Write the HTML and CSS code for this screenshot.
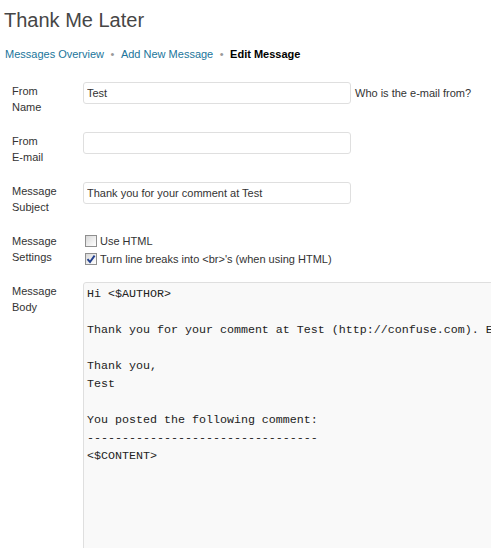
FILE: index.html
```html
<!DOCTYPE html>
<html>
<head>
<meta charset="utf-8">
<title>Thank Me Later</title>
<link rel="stylesheet" href="styles.css">
</head>
<body>
<div class="wrap">
  <h2 class="title">Thank Me Later</h2>
  <div class="crumbs">
    <a href="#">Messages Overview</a><span class="sep">•</span><a href="#">Add New Message</a><span class="sep">•</span><span class="current">Edit Message</span>
  </div>
  <div class="form">
    <div class="row">
      <div class="label">From<br>Name</div>
      <div class="field"><input class="text" type="text" value="Test"><span class="hint">Who is the e-mail from?</span></div>
    </div>
    <div class="row">
      <div class="label">From<br>E-mail</div>
      <div class="field"><input class="text" type="text" value=""></div>
    </div>
    <div class="row">
      <div class="label">Message<br>Subject</div>
      <div class="field"><input class="text" type="text" value="Thank you for your comment at Test"></div>
    </div>
    <div class="row">
      <div class="label">Message<br>Settings</div>
      <div class="field checks">
        <label class="check"><span class="box"></span>Use HTML</label>
        <label class="check"><span class="box"><svg viewBox="0 0 10 10" width="10" height="10"><path d="M1.5 5.2 L4 8 L8.6 1.6" fill="none" stroke="#23408e" stroke-width="1.9"/></svg></span>Turn line breaks into &lt;br&gt;'s (when using HTML)</label>
      </div>
    </div>
    <div class="row last">
      <div class="label">Message<br>Body</div>
      <div class="field clip"><textarea class="body" wrap="off" readonly>Hi &lt;$AUTHOR&gt;

Thank you for your comment at Test (http://confuse.com). Enjoy your stay!

Thank you,
Test

You posted the following comment:
---------------------------------
&lt;$CONTENT&gt;</textarea></div>
    </div>
  </div>
</div>
</body>
</html>
```

FILE: styles.css
```css
html, body {
  margin: 0;
  padding: 0;
  background: #fff;
  overflow: hidden;
}
body {
  font-family: Arial, "Liberation Sans", sans-serif;
  color: #333;
  height: 548px;
}
.wrap {
  padding-left: 4px;
  height: 548px;
  display: flex;
  flex-direction: column;
  overflow: hidden;
}
.title {
  margin: 0;
  padding-top: 8px;
  font-size: 20px;
  line-height: 24px;
  font-weight: normal;
  color: #464646;
}
.crumbs {
  margin-top: 14px;
  font-size: 11px;
  line-height: 17px;
  padding-left: 1px;
  color: #999;
}
.crumbs a {
  color: #21759b;
  text-decoration: none;
}
.crumbs .sep {
  margin: 0 6.5px;
  color: #999;
}
.crumbs .current {
  font-weight: bold;
  color: #000;
}
.form {
  margin-top: 19px;
  padding-left: 8px;
  flex: 1;
  display: flex;
  flex-direction: column;
  min-height: 0;
}
.row {
  display: grid;
  grid-template-columns: 71px minmax(0, 1fr);
  min-height: 50px;
  align-items: start;
}
.row.last {
  flex: 1;
  min-height: 0;
  align-items: stretch;
}
.label {
  font-size: 11px;
  line-height: 16px;
  padding-top: 1px;
  color: #333;
}
.field {
  display: flex;
  align-items: center;
}
.text {
  box-sizing: border-box;
  width: 268px;
  height: 22px;
  margin: 0;
  padding: 0 3px;
  border: 1px solid #dfdfdf;
  border-radius: 3px;
  font-family: Arial, "Liberation Sans", sans-serif;
  font-size: 11px;
  color: #333;
  background: #fff;
  outline: none;
}
.hint {
  margin-left: 4px;
  font-size: 11px;
  color: #333;
}
.checks {
  flex-direction: column;
  align-items: flex-start;
}
.check {
  display: flex;
  align-items: center;
  font-size: 11px;
  line-height: 18px;
  color: #333;
}
.box {
  box-sizing: border-box;
  width: 12px;
  height: 12px;
  margin-left: 2px;
  margin-right: 3px;
  border: 1px solid #8f8f8f;
  background: linear-gradient(135deg, #d8d8d8 0%, #f4f4f4 70%, #ffffff 100%);
  display: flex;
  align-items: center;
  justify-content: center;
}
.box svg {
  display: block;
}
.clip {
  overflow: hidden;
  align-items: flex-start;
}
.body {
  box-sizing: border-box;
  display: block;
  flex: none;
  width: 520px;
  height: 320px;
  margin: 0;
  padding: 2px 3px;
  border: 1px solid #dfdfdf;
  border-radius: 3px;
  background: #f9f9f9;
  font-family: "Liberation Mono", "Courier New", monospace;
  font-size: 11.67px;
  line-height: 18px;
  color: #222;
  resize: none;
  overflow: hidden;
  outline: none;
  white-space: pre;
}
```
